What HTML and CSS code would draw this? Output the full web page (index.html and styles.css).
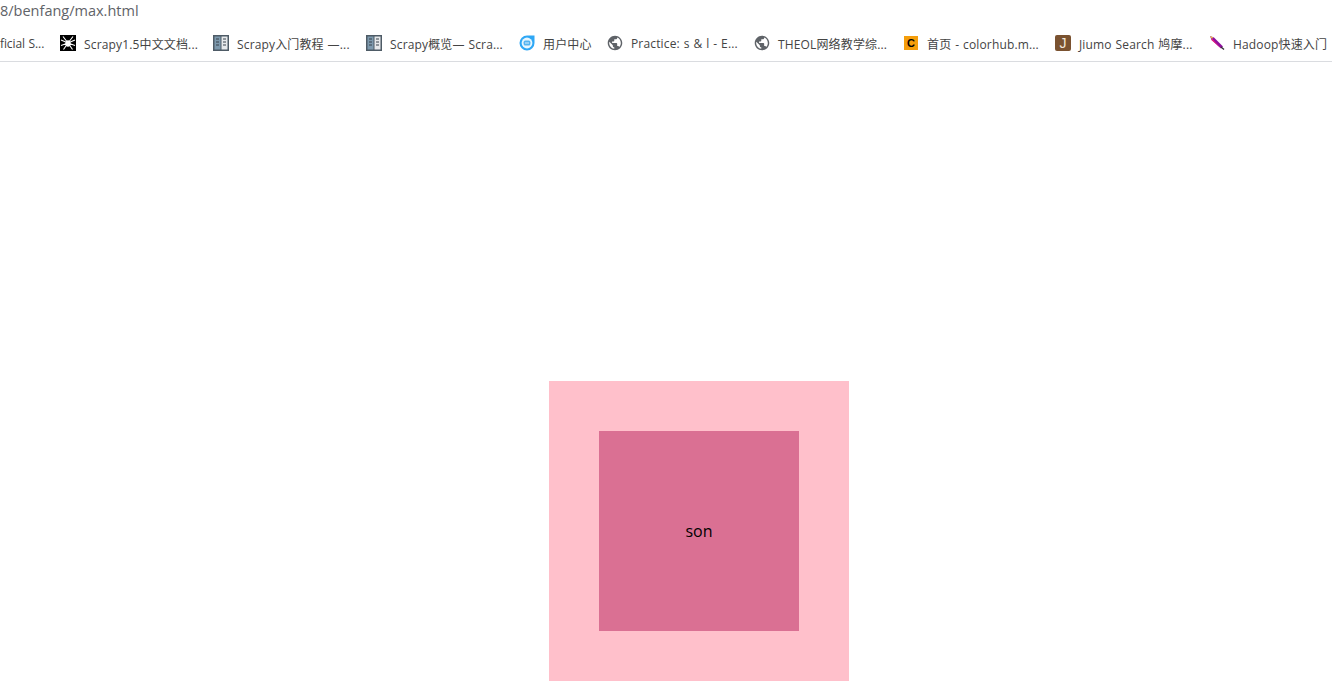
FILE: index.html
```html
<!DOCTYPE html>
<html lang="en">
<head>
  <meta charset="UTF-8">
  <title>max</title>
  <link rel="stylesheet" href="styles.css">
</head>
<body>
  <div class="url-bar">8/benfang/max.html</div>

  <div class="bookmarks">
    <div class="bookmark bm-first">
      <span class="bm-text">ficial S...</span>
    </div>
    <div class="bookmark bm-a">
      <svg class="bm-icon" viewBox="0 0 16 16">
        <rect width="16" height="16" fill="#000"/>
        <path d="M8 8L3 1.5M8 8L13 1.5M8 8L1 5M8 8L15 5M8 8L1 10.5M8 8L15 10.5M8 8L3.5 14.5M8 8L12.5 14.5" stroke="#fff" stroke-width="1.1" fill="none"/>
        <ellipse cx="8" cy="8.5" rx="2.6" ry="3.2" fill="#fff"/>
      </svg>
      <span class="bm-text">Scrapy1.5中文文档...</span>
    </div>
    <div class="bookmark bm-b">
      <svg class="bm-icon" viewBox="0 0 16 16">
        <rect width="16" height="16" fill="#4e5b66"/>
        <rect x="1.5" y="1.5" width="6" height="13" fill="#7d99ad"/>
        <rect x="8.5" y="1.5" width="6" height="13" fill="#e6e9eb"/>
        <path d="M3 4h3M3 7h3M3 10h3M10 4h3M10 7h3M10 10h3" stroke="#39434c" stroke-width="1.2"/>
      </svg>
      <span class="bm-text">Scrapy入门教程 —...</span>
    </div>
    <div class="bookmark bm-c">
      <svg class="bm-icon" viewBox="0 0 16 16">
        <rect width="16" height="16" fill="#4e5b66"/>
        <rect x="1.5" y="1.5" width="6" height="13" fill="#7d99ad"/>
        <rect x="8.5" y="1.5" width="6" height="13" fill="#e6e9eb"/>
        <path d="M3 4h3M3 7h3M3 10h3M10 4h3M10 7h3M10 10h3" stroke="#39434c" stroke-width="1.2"/>
      </svg>
      <span class="bm-text">Scrapy概览— Scra...</span>
    </div>
    <div class="bookmark bm-d">
      <svg class="bm-icon" viewBox="0 0 16 16">
        <path d="M8 .5H15.5V8A7.5 7.5 0 1 1 8 .5Z" fill="#2ea7f5"/>
        <circle cx="8" cy="8" r="5.4" fill="#e8f6fe"/>
        <rect x="4.6" y="5.6" width="6.8" height="5" rx="1.6" fill="#56b4f0"/>
        <path d="M6 8h4" stroke="#d5eefc" stroke-width="1"/>
      </svg>
      <span class="bm-text">用户中心</span>
    </div>
    <div class="bookmark bm-e">
      <svg class="bm-icon" viewBox="1 1 22 22">
        <path fill="#5f6368" d="M12 2C6.48 2 2 6.48 2 12s4.48 10 10 10 10-4.48 10-10S17.52 2 12 2zm-1 17.93c-3.95-.49-7-3.85-7-7.93 0-.62.08-1.21.21-1.79L9 15v1c0 1.1.9 2 2 2v1.93zm6.9-2.54c-.26-.81-1-1.39-1.9-1.39h-1v-3c0-.55-.45-1-1-1H8v-2h2c.55 0 1-.45 1-1V7h2c1.1 0 2-.9 2-2v-.41c2.93 1.19 5 4.06 5 7.41 0 2.08-.8 3.97-2.1 5.39z"/>
      </svg>
      <span class="bm-text">Practice: s &amp; l - E...</span>
    </div>
    <div class="bookmark bm-f">
      <svg class="bm-icon" viewBox="1 1 22 22">
        <path fill="#5f6368" d="M12 2C6.48 2 2 6.48 2 12s4.48 10 10 10 10-4.48 10-10S17.52 2 12 2zm-1 17.93c-3.95-.49-7-3.85-7-7.93 0-.62.08-1.21.21-1.79L9 15v1c0 1.1.9 2 2 2v1.93zm6.9-2.54c-.26-.81-1-1.39-1.9-1.39h-1v-3c0-.55-.45-1-1-1H8v-2h2c.55 0 1-.45 1-1V7h2c1.1 0 2-.9 2-2v-.41c2.93 1.19 5 4.06 5 7.41 0 2.08-.8 3.97-2.1 5.39z"/>
      </svg>
      <span class="bm-text">THEOL网络教学综...</span>
    </div>
    <div class="bookmark bm-g">
      <span class="bm-icon icon-c">C</span>
      <span class="bm-text">首页 - colorhub.m...</span>
    </div>
    <div class="bookmark bm-h">
      <span class="bm-icon icon-j">J</span>
      <span class="bm-text">Jiumo Search 鸠摩...</span>
    </div>
    <div class="bookmark bm-i">
      <svg class="bm-icon" viewBox="0 0 16 16">
        <path d="M1 1L5 2.5 14 11.5 12 13.5 2.5 5Z" fill="#8e0f9e"/>
        <path d="M1 1L4 2.2 3 4Z" fill="#f4d835"/>
        <path d="M2.5 5L3 3.5 12 13.5Z" fill="#ee1f7c"/>
        <path d="M12 12L15 14.5" stroke="#333" stroke-width="1.4"/>
      </svg>
      <span class="bm-text">Hadoop快速入门</span>
    </div>
  </div>

  <div class="father">
    <div class="son">son</div>
  </div>
</body>
</html>
```

FILE: styles.css
```css
html, body {
  height: 100%;
}
body {
  margin: 0;
  background: #fff;
  overflow: hidden;
  font-family: "Open Sans", "Noto Sans CJK SC", sans-serif;
}
.url-bar {
  height: 22px;
  line-height: 21px;
  font-size: 14.5px;
  color: #5f6368;
  white-space: nowrap;
}
.bookmarks {
  display: flex;
  height: 36px;
  padding-top: 3px;
  align-items: center;
  border-bottom: 1px solid #dadce0;
  font-size: 12px;
  letter-spacing: 0.15px;
  color: #444;
  overflow: hidden;
}
.bookmark {
  display: flex;
  flex: none;
  align-items: center;
  gap: 8px;
  overflow: hidden;
  white-space: nowrap;
}
.bm-first {
  width: 60px;
  padding-right: 16px;
  box-sizing: border-box;
  letter-spacing: -0.1px;
}
.bm-a, .bm-b, .bm-c { width: 153px; }
.bm-d { width: 88px; }
.bm-e { width: 147px; }
.bm-f { width: 150px; }
.bm-g { width: 151px; }
.bm-h { width: 154px; }
.bm-i { width: 123px; }
.bm-text {
  flex: none;
  margin-top: 1px;
  word-spacing: 0.6px;
}
.bm-icon {
  display: block;
  flex: none;
  width: 16px;
  height: 16px;
}
.icon-c {
  width: 14px;
  height: 14px;
  margin-right: 1px;
  background: #f59e0b;
  color: #000;
  font: bold 11px/14px "Liberation Sans", sans-serif;
  text-align: center;
}
.icon-j {
  background: #7a5230;
  color: #f0e6da;
  font: 14px/16px "Liberation Sans", sans-serif;
  text-align: center;
  border-radius: 2px;
}
.father {
  width: 200px;
  height: 200px;
  margin: 319px 0 0 549px;
  padding: 50px;
  background: pink;
}
.son {
  display: flex;
  width: 200px;
  height: 200px;
  align-items: center;
  justify-content: center;
  background: #da7093;
  color: #000;
  font-size: 16px;
}
```
